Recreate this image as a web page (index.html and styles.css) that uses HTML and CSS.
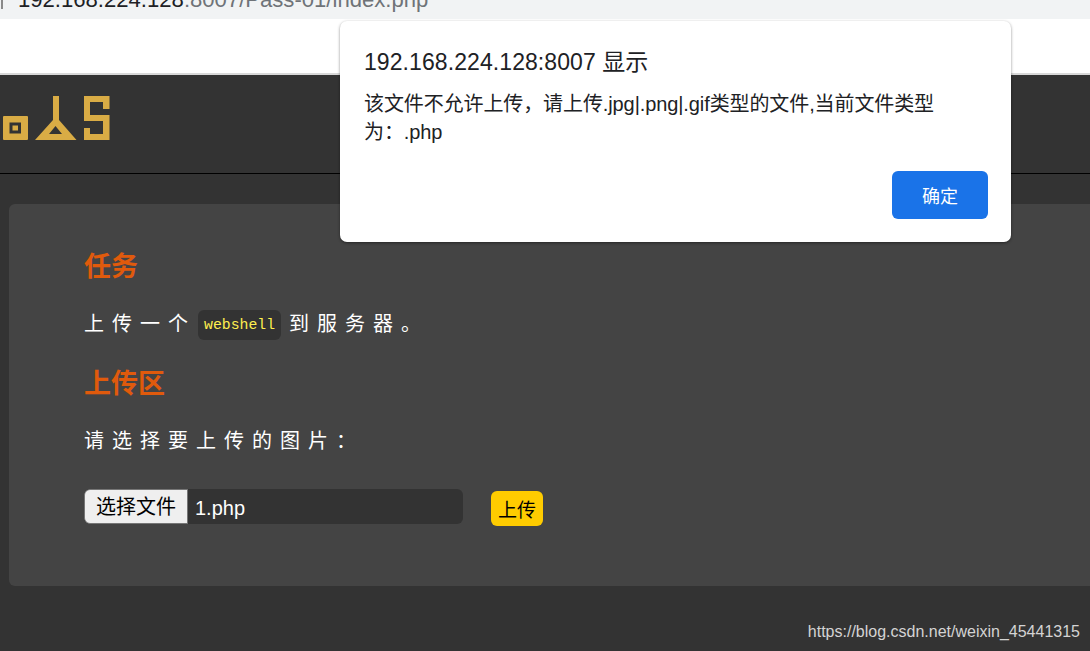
FILE: index.html
```html
<!DOCTYPE html>
<html lang="zh">
<head>
    <meta charset="UTF-8">
    <meta name="viewport" content="width=device-width, initial-scale=1.0">
    <title>upload-labs</title>
    <link rel="stylesheet" href="styles.css">
</head>
<body>
    <div class="address-bar">
        <span class="url-host">192.168.224.128</span><span class="url-path">:8007/Pass-01/index.php</span>
    </div>
    <div class="toolbar"></div>

    <header class="site-header">
        <svg class="logo" width="110" height="44" viewBox="0 0 110 44" aria-hidden="true">
            <path fill-rule="evenodd" fill="#d9ac45" d="M4 20h23a1 1 0 0 1 1 1v22a1 1 0 0 1-1 1H4a1 1 0 0 1-1-1V21a1 1 0 0 1 1-1zM9.500 26.500v11h11.500v-11zM12.500 29.500h5.500v5h-5.500z"/>
            <path fill-rule="evenodd" fill="#d9ac45" d="M53 0h6v24l17.500 20H35l18-20zM55.500 30l-6.500 8h13z"/>
            <path fill="#d9ac45" d="M84 0h25.500v13h-6.500V6H90v13h19.500v25H84V32h6v6h13V25H84z"/>
        </svg>
    </header>

    <main class="content">
        <section class="card">
            <h2 class="card-title">任务</h2>
            <p class="card-text">上传一个<code class="tag">webshell</code>到服务器。</p>
            <h2 class="card-title">上传区</h2>
            <p class="card-text">请选择要上传的图片：</p>
            <form class="upload-form" onsubmit="return false">
                <div class="file-box">
                    <span class="file-btn">选择文件</span>
                    <span class="file-name">1.php</span>
                </div>
                <button class="upload-btn" type="submit">上传</button>
            </form>
        </section>
    </main>

    <div class="dialog">
        <div class="dialog-title">192.168.224.128:8007 显示</div>
        <div class="dialog-msg">该文件不允许上传，请上传.jpg|.png|.gif类型的文件,当前文件类型为：.php</div>
        <div class="dialog-actions">
            <button class="dialog-ok" type="button">确定</button>
        </div>
    </div>

    <div class="watermark">https://blog.csdn.net/weixin_45441315</div>
</body>
</html>
```

FILE: styles.css
```css
html, body {
    margin: 0;
    height: 651px;
    overflow: hidden;
}
body {
    font-family: "Liberation Sans", "Noto Sans CJK SC", sans-serif;
    background: #333;
    color: #fff;
}

.address-bar {
    height: 19px;
    background: linear-gradient(#8a8a8a, #8a8a8a) 1px 0 / 2px 9px no-repeat, #f1f3f4;
    overflow: hidden;
    padding-left: 18px;
    font-size: 22.100px;
    line-height: 0;
    white-space: nowrap;
    box-sizing: border-box;
}
.url-host { color: #202124; }
.url-path { color: #6f7378; }

.toolbar {
    height: 54px;
    background: #fff;
    border-bottom: 2px solid #d8d8d8;
}

.site-header {
    height: 77px;
    border-bottom: 1px solid #000;
    padding-top: 21px;
}
.logo { display: block; }

.content { padding: 30px 0 0 9px; }

.card {
    width: 1200px;
    height: 382px;
    box-sizing: border-box;
    padding: 30px 0 0 75px;
    background: #444;
    border-radius: 6px;
}
.card-title {
    margin: 0;
    font-size: 27px;
    line-height: 66px;
    height: 64px;
    color: #e05a0c;
    font-weight: bold;
}
.card-text {
    margin: 0;
    height: 53px;
    font-size: 20px;
    line-height: 52px;
    letter-spacing: 8px;
}
.tag {
    display: inline-block;
    height: 30px;
    margin: 0 8px 0 2px;
    padding: 0 6px;
    background: #333;
    border-radius: 6px;
    font-family: "Liberation Mono", monospace;
    font-size: 14.800px;
    line-height: 30px;
    letter-spacing: 0;
    color: #ffef4f;
    vertical-align: 2px;
}

.upload-form {
    display: flex;
    align-items: flex-start;
    gap: 28px;
    margin-top: 21px;
}
.file-box {
    display: flex;
    width: 379px;
    height: 35px;
    background: #333;
    border-radius: 6px;
    overflow: hidden;
    font-size: 20px;
}
.file-btn {
    width: 104px;
    box-sizing: border-box;
    background: #efefef;
    border: 1px solid #767676;
    border-radius: 6px 0 0 6px;
    color: #000;
    text-align: center;
    line-height: 35px;
}
.file-name {
    padding-left: 7px;
    line-height: 38px;
}
.upload-btn {
    width: 52px;
    height: 35px;
    margin-top: 2px;
    padding: 0;
    background: #fc0;
    border: none;
    border-radius: 6px;
    color: #000;
    font-family: inherit;
    font-size: 19px;
}

.dialog {
    position: absolute;
    left: 340px;
    top: 21px;
    width: 671px;
    height: 221px;
    box-sizing: border-box;
    padding: 25px 23px 0 24px;
    background: #fff;
    border-radius: 7px;
    box-shadow: 0 1px 3px rgba(0, 0, 0, 0.45);
    color: #202124;
}
.dialog-title {
    font-size: 23px;
    letter-spacing: 0.080px;
    line-height: 32px;
}
.dialog-msg {
    width: 575px;
    margin-top: 12px;
    font-size: 20px;
    letter-spacing: -0.100px;
    line-height: 28px;
}
.dialog-actions {
    display: flex;
    justify-content: flex-end;
    margin-top: 25px;
}
.dialog-ok {
    width: 96px;
    height: 48px;
    background: #1a73e8;
    border: none;
    border-radius: 6px;
    color: #fff;
    font-family: inherit;
    font-size: 18px;
}

.watermark {
    position: absolute;
    right: 10px;
    bottom: 10px;
    font-size: 16px;
    color: #d4d4d4;
}
```
